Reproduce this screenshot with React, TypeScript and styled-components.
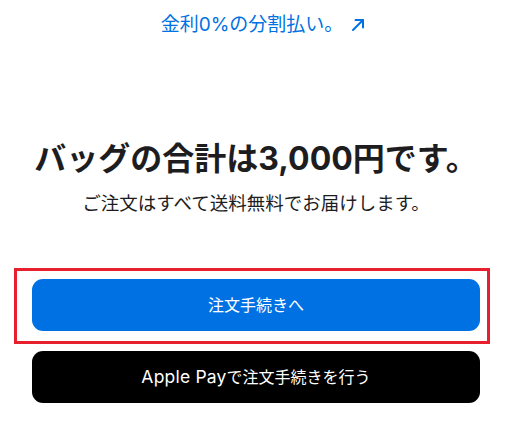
import React from "react";
import styled, { createGlobalStyle } from "styled-components";

const GlobalStyle = createGlobalStyle`
  html, body {
    margin: 0;
    padding: 0;
    background: #ffffff;
  }
  body {
    font-family: "Inter", "Noto Sans CJK JP", sans-serif;
    -webkit-font-smoothing: antialiased;
  }
`;

const Page = styled.main`
  width: 512px;
  height: 444px;
  display: flex;
  flex-direction: column;
  align-items: center;
  box-sizing: border-box;
  padding-top: 12px;
`;

const FinanceLink = styled.a`
  display: flex;
  align-items: center;
  gap: 8px;
  color: #0071e3;
  font-size: 19px;
  line-height: 26px;
  text-decoration: none;
  margin-left: 14px;
`;

const Heading = styled.h1`
  margin: 101px 0 0;
  font-size: 32px;
  line-height: 40px;
  font-weight: 700;
  color: #1d1d1f;
  letter-spacing: 0;
`;

const Note = styled.p`
  margin: 12px 0 0;
  font-size: 18.5px;
  line-height: 24px;
  color: #1d1d1f;
`;

const Highlight = styled.div`
  align-self: flex-start;
  margin: 53px 0 0 14px;
  width: 476px;
  box-sizing: border-box;
  border: 3px solid #e8202e;
  padding: 8px 7px 10px 15px;
`;

const Button = styled.button<{ $dark?: boolean }>`
  display: flex;
  align-items: center;
  justify-content: center;
  width: 448px;
  height: 52px;
  border: none;
  border-radius: 11px;
  background: ${p => (p.$dark ? "#000000" : "#0071e3")};
  color: #ffffff;
  font-family: "Inter", "Noto Sans CJK JP", sans-serif;
  font-size: 16px;
  padding: 0 0 2px;
  cursor: pointer;
`;

const PayButton = styled(Button)`
  margin-top: 7px;
`;

const Latin = styled.span`
  font-size: 17.5px;
  letter-spacing: 0.2px;
`;

const Arrow = () => (
  <svg width="14" height="14" viewBox="0 0 14 14" fill="none" stroke="#0071e3" strokeWidth="2" strokeLinecap="round" strokeLinejoin="round">
    <path d="M2 12 L12 2" />
    <path d="M4.5 2 H12 V9.5" />
  </svg>
);

export default function App() {
  return (
    <>
      <GlobalStyle />
      <Page>
        <FinanceLink href="#">
          <span>金利0%の分割払い。</span>
          <Arrow />
        </FinanceLink>
        <Heading>バッグの合計は3,000円です。</Heading>
        <Note>ご注文はすべて送料無料でお届けします。</Note>
        <Highlight>
          <Button>注文手続きへ</Button>
        </Highlight>
        <PayButton $dark>
          <Latin>Apple Pay</Latin>で注文手続きを行う
        </PayButton>
      </Page>
    </>
  );
}
